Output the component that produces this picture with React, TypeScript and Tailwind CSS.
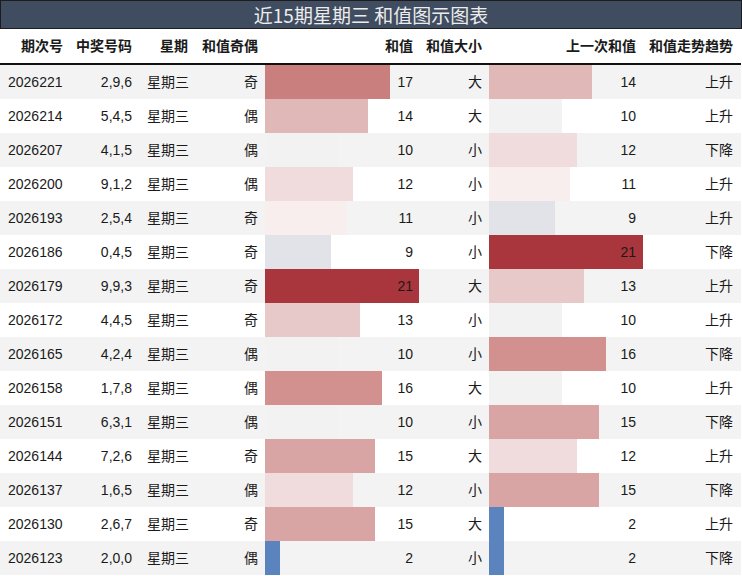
import React from 'react';

type Row = {
    issue: string;
    nums: string;
    parity: string;
    sum: number;
    size: string;
    prev: number;
    trend: string;
};

const rows: Row[] = [
    { issue: '2026221', nums: '2,9,6', parity: '奇', sum: 17, size: '大', prev: 14, trend: '上升' },
    { issue: '2026214', nums: '5,4,5', parity: '偶', sum: 14, size: '大', prev: 10, trend: '上升' },
    { issue: '2026207', nums: '4,1,5', parity: '偶', sum: 10, size: '小', prev: 12, trend: '下降' },
    { issue: '2026200', nums: '9,1,2', parity: '偶', sum: 12, size: '小', prev: 11, trend: '上升' },
    { issue: '2026193', nums: '2,5,4', parity: '奇', sum: 11, size: '小', prev: 9, trend: '上升' },
    { issue: '2026186', nums: '0,4,5', parity: '奇', sum: 9, size: '小', prev: 21, trend: '下降' },
    { issue: '2026179', nums: '9,9,3', parity: '奇', sum: 21, size: '大', prev: 13, trend: '上升' },
    { issue: '2026172', nums: '4,4,5', parity: '奇', sum: 13, size: '小', prev: 10, trend: '上升' },
    { issue: '2026165', nums: '4,2,4', parity: '偶', sum: 10, size: '小', prev: 16, trend: '下降' },
    { issue: '2026158', nums: '1,7,8', parity: '偶', sum: 16, size: '大', prev: 10, trend: '上升' },
    { issue: '2026151', nums: '6,3,1', parity: '偶', sum: 10, size: '小', prev: 15, trend: '下降' },
    { issue: '2026144', nums: '7,2,6', parity: '奇', sum: 15, size: '大', prev: 12, trend: '上升' },
    { issue: '2026137', nums: '1,6,5', parity: '偶', sum: 12, size: '小', prev: 15, trend: '下降' },
    { issue: '2026130', nums: '2,6,7', parity: '奇', sum: 15, size: '大', prev: 2, trend: '上升' },
    { issue: '2026123', nums: '2,0,0', parity: '偶', sum: 2, size: '小', prev: 2, trend: '下降' },
];

// diverging scale, blue below 10, red above
const barColors: Record<number, string> = {
    2: '#5b83bd',
    9: '#e2e3e9',
    10: '#f3f2f3',
    11: '#f8eeee',
    12: '#f0dcdc',
    13: '#e8c9c9',
    14: '#e1b8b8',
    15: '#d9a5a4',
    16: '#d2918f',
    17: '#c97f7d',
    21: '#a8363c',
};

function BarCell({ value, width }: { value: number; width: string }) {
    return (
        <div className={`relative ${width} h-full flex items-center justify-end pr-[7px]`}>
            <div
                className="absolute left-0 top-0 h-full"
                style={{ width: Math.round((value / 21) * 154), backgroundColor: barColors[value] }}
            />
            <span className="relative">{value}</span>
        </div>
    );
}

export default function App() {
    return (
        <div className="w-[742px] h-[576px] bg-white text-[14px] text-[#1a1a1a] font-['Liberation_Sans','Noto_Sans_CJK_SC',sans-serif] overflow-hidden">
            {/* Title */}
            <div className="h-[29px] bg-[#404c60] border border-[#1c1c1c] flex items-center justify-center text-[19px] text-[#ececec] font-['Noto_Sans_CJK_SC',sans-serif] leading-none">
                近15期星期三 和值图示图表
            </div>

            {/* Header */}
            <div className="h-[36px] w-[741px] flex items-center border-b-2 border-[#111] font-bold">
                <div className="w-[70px] text-right pr-[7px]">期次号</div>
                <div className="w-[69px] text-right pr-[7px]">中奖号码</div>
                <div className="w-[56px] text-right pr-[7px]">星期</div>
                <div className="w-[70px] text-right pr-[7px]">和值奇偶</div>
                <div className="w-[155px] text-right pr-[7px]">和值</div>
                <div className="w-[69px] text-right pr-[7px]">和值大小</div>
                <div className="w-[154px] text-right pr-[7px]">上一次和值</div>
                <div className="w-[98px] text-right pr-[8px]">和值走势趋势</div>
            </div>

            {/* Rows */}
            {rows.map((r, i) => (
                <div
                    key={r.issue}
                    className={`h-[34px] w-[741px] flex items-center ${i % 2 === 0 ? 'bg-[#f3f3f3]' : 'bg-white'}`}
                >
                    <div className="w-[70px] pl-[8px]">{r.issue}</div>
                    <div className="w-[69px] text-right pr-[7px]">{r.nums}</div>
                    <div className="w-[56px] pl-[8px]">星期三</div>
                    <div className="w-[70px] text-right pr-[7px]">{r.parity}</div>
                    <BarCell value={r.sum} width="w-[155px]" />
                    <div className="w-[69px] text-right pr-[7px]">{r.size}</div>
                    <BarCell value={r.prev} width="w-[154px]" />
                    <div className="w-[98px] text-right pr-[8px]">{r.trend}</div>
                </div>
            ))}
        </div>
    );
}
